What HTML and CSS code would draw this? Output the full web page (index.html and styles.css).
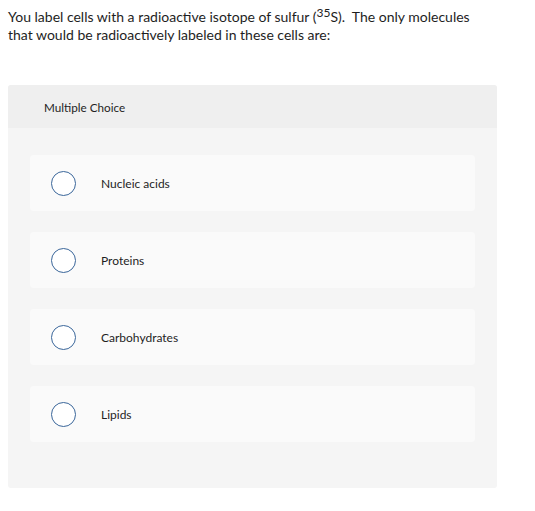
FILE: index.html
```html
<!DOCTYPE html>
<html>
<head>
<meta charset="utf-8">
<link rel="stylesheet" href="styles.css">
</head>
<body>
<p class="question">You label cells with a radioactive isotope of sulfur (<sup>35</sup>S).&nbsp; The only molecules that would be radioactively labeled in these cells are:</p>
<div class="panel">
  <div class="panel-head">Multiple Choice</div>
  <div class="options">
    <div class="option"><span class="radio"></span><span class="label">Nucleic acids</span></div>
    <div class="option"><span class="radio"></span><span class="label">Proteins</span></div>
    <div class="option"><span class="radio"></span><span class="label">Carbohydrates</span></div>
    <div class="option"><span class="radio"></span><span class="label">Lipids</span></div>
  </div>
</div>
</body>
</html>
```
FILE: styles.css
```css
html, body { margin: 0; padding: 0; background: #fff; }
body {
  padding: 7px 8px 0 8px;
  font-family: Lato, "Open Sans", sans-serif;
  color: #1e1e1e;
}
.question {
  margin: 0;
  width: 478px;
  font-size: 14px;
  line-height: 18px;
  color: #1e1e1e;
}
.question sup {
  font-size: 12px;
  line-height: 1;
  vertical-align: 5px;
}
.panel {
  margin-top: 41px;
  width: 489px;
  height: 403px;
  background: #f5f5f5;
  border-radius: 3px;
}
.panel-head {
  height: 43px;
  background: #efefef;
  border-radius: 3px 3px 0 0;
  display: flex;
  align-items: center;
  padding-left: 36px;
  font-size: 11.7px;
  color: #1e1e1e;
}
.options {
  display: flex;
  flex-direction: column;
  gap: 21px;
  padding: 27px 22px 0 22px;
}
.option {
  height: 56px;
  background: #fafafa;
  border-radius: 4px;
  display: flex;
  align-items: center;
  padding-left: 21px;
}
.radio {
  width: 25px;
  height: 25px;
  box-sizing: border-box;
  border: 1.3px solid #3a669a;
  border-radius: 50%;
  background: #fff;
  flex: none;
}
.label {
  margin-left: 25px;
  font-size: 12px;
  color: #1e1e1e;
}
```
